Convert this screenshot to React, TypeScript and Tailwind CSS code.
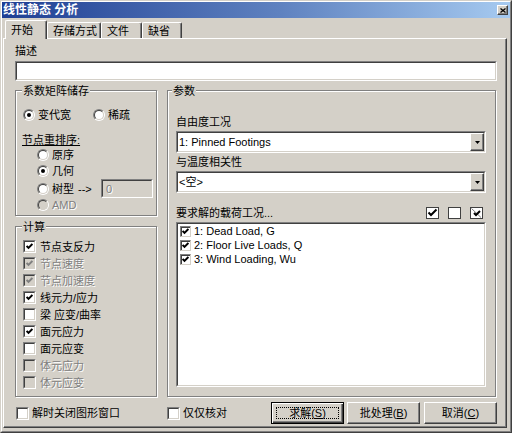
const sunkenOuter = "border border-t-[#808080] border-l-[#808080] border-r-white border-b-white";
const sunkenInner = "border border-t-[#404040] border-l-[#404040] border-r-[#d4d0c8] border-b-[#d4d0c8]";
const raised = "border border-t-white border-l-white border-r-[#404040] border-b-[#404040] shadow-[inset_-1px_-1px_0_#808080]";
const disabledText = "text-[#808080] [text-shadow:1px_1px_0_#fff]";

const CALC = [
  { label: "节点支反力", checked: true },
  { label: "节点速度", checked: true, disabled: true },
  { label: "节点加速度", checked: true, disabled: true },
  { label: "线元力/应力", checked: true },
  { label: "梁 应变/曲率" },
  { label: "面元应力", checked: true },
  { label: "面元应变" },
  { label: "体元应力", disabled: true },
  { label: "体元应变", disabled: true },
];

const LOADS = ["1: Dead Load, G", "2: Floor Live Loads, Q", "3: Wind Loading, Wu"];

function Radio({ checked, disabled }: { checked?: boolean; disabled?: boolean }) {
  return (
    <span className="w-[12px] h-[12px] shrink-0 flex rounded-full border border-t-[#808080] border-l-[#808080] border-r-white border-b-white">
      <span className={`flex-1 flex items-center justify-center rounded-full border border-t-[#404040] border-l-[#404040] border-r-[#d4d0c8] border-b-[#d4d0c8] ${disabled ? "bg-[#d4d0c8]" : "bg-white"}`}>
        {checked && <span className="w-[4px] h-[4px] rounded-full bg-black" />}
      </span>
    </span>
  );
}

function Tick({ color = "#000" }: { color?: string }) {
  return (
    <svg width="7" height="7" viewBox="0 0 7 7">
      <polyline points="0.6,3 2.5,4.9 6.4,1" fill="none" stroke={color} strokeWidth="2" />
    </svg>
  );
}

function Check({ checked, disabled }: { checked?: boolean; disabled?: boolean }) {
  return (
    <span className={`w-[13px] h-[13px] shrink-0 flex ${sunkenOuter}`}>
      <span className={`flex-1 flex items-center justify-center ${sunkenInner} ${disabled ? "bg-[#d4d0c8]" : "bg-white"}`}>
        {checked && <Tick color={disabled ? "#808080" : "#000"} />}
      </span>
    </span>
  );
}

function Group({ title, className, children }: { title: string; className: string; children: React.ReactNode }) {
  return (
    <div className={`relative border border-[#808080] shadow-[1px_1px_0_#fff,inset_1px_1px_0_#fff] ${className}`}>
      <span className="absolute -top-[7px] px-px bg-[#d4d0c8] leading-[14px] [left:var(--lg)]">{title}</span>
      {children}
    </div>
  );
}

function Select({ value }: { value: string }) {
  return (
    <div className={`w-[310px] h-[22px] flex ${sunkenOuter}`}>
      <div className={`flex-1 flex items-center bg-white ${sunkenInner}`}>
        <span className="flex-1 pl-px">{value}</span>
        <span className={`w-[14px] h-[18px] flex items-center justify-center bg-[#d4d0c8] ${raised}`}>
          <svg width="5" height="3" viewBox="0 0 5 3">
            <polygon points="0,0 5,0 2.5,3" fill="#000" />
          </svg>
        </span>
      </div>
    </div>
  );
}

function Button({ label, hot, isDefault }: { label: string; hot: string; isDefault?: boolean }) {
  return (
    <button
      className={`relative w-[73px] h-[22px] flex items-center justify-center bg-[#d4d0c8] ${
        isDefault ? "border border-black shadow-[inset_1px_1px_0_#fff,inset_-1px_-1px_0_#404040,inset_-2px_-2px_0_#808080]" : raised
      }`}
    >
      {isDefault && <span className="absolute inset-[4px] border border-dotted border-black" />}
      <span>
        {label}(<u>{hot}</u>)
      </span>
    </button>
  );
}

export default function App() {
  return (
    <div className="w-[512px] h-[433px] bg-[#d4d0c8] border border-t-[#d4d0c8] border-l-[#d4d0c8] border-r-[#404040] border-b-[#404040] font-['Liberation_Sans','Noto_Sans_CJK_SC',sans-serif] text-[11px] leading-[14px] text-black overflow-hidden">
      <div className="h-full flex flex-col border border-t-white border-l-white border-r-[#808080] border-b-[#808080]">
        {/* Title bar */}
        <div className="h-[16px] flex items-center justify-between pl-[1px] pr-[2px] bg-[linear-gradient(to_right,#1f3f94,#5f82c0_55%,#a6caf0)]">
          <span className="text-white font-bold text-[12px]">线性静态 分析</span>
          <span className={`w-[11px] h-[10px] flex items-center justify-center bg-[#d4d0c8] ${raised}`}>
            <svg width="6" height="5" viewBox="0 0 6 5">
              <path d="M0.5 0.5L5.5 4.5M5.5 0.5L0.5 4.5" stroke="#000" strokeWidth="1.3" />
            </svg>
          </span>
        </div>

        {/* Tabs */}
        <div className="h-[20px] flex items-end ml-[3px] relative z-10">
          <div className="w-[42px] h-[19px] -mb-px pl-[5px] pt-[2px] bg-[#d4d0c8] rounded-t-[2px] border-t border-l border-t-white border-l-white border-r border-r-[#404040] shadow-[inset_-1px_0_0_#808080]">
            开始
          </div>
          {[
            ["存储方式", "w-[54px]"],
            ["文件", "w-[41px]"],
            ["缺省", "w-[40px]"],
          ].map(([t, w]) => (
            <div
              key={t}
              className={`${w} h-[16px] pl-[5px] pt-px rounded-t-[2px] border-t border-l border-t-white border-l-white border-r border-r-[#404040] shadow-[inset_-1px_0_0_#808080]`}
            >
              {t}
            </div>
          ))}
        </div>

        {/* Tab panel */}
        <div className={`ml-[1px] w-[504px] h-[390px] pl-[11px] pt-[5px] ${raised}`}>
          <div>描述</div>
          <div className={`mt-[3px] w-[482px] h-[20px] flex ${sunkenOuter}`}>
            <div className={`flex-1 bg-white ${sunkenInner}`} />
          </div>

          <div className="mt-[9px] flex gap-[10px]">
            {/* Left column */}
            <div className="w-[142px] flex flex-col gap-[10px]">
              <Group title="系数矩阵储存" className="h-[126px] pt-[17px] [--lg:6px]">
                <div className="flex items-center h-[14px] pl-[7px]">
                  <span className="w-[70px] flex items-center gap-[3px]">
                    <Radio checked />
                    变代宽
                  </span>
                  <span className="flex items-center gap-[3px]">
                    <Radio />
                    稀疏
                  </span>
                </div>
                <div className="mt-[11px] pl-[6px] underline">节点重排序:</div>
                <div className="pl-[21px]">
                  <div className="h-[16px] flex items-center gap-[3px]">
                    <Radio />
                    原序
                  </div>
                  <div className="h-[16px] flex items-center gap-[3px]">
                    <Radio checked />
                    几何
                  </div>
                  <div className="h-[19px] flex items-center gap-[3px]">
                    <Radio />
                    <span className="w-[23px]">树型</span>
                    <span className="w-[20px]">--&gt;</span>
                    <div className={`w-[52px] h-[19px] flex ${sunkenOuter}`}>
                      <div className={`flex-1 flex items-center pl-[3px] bg-[#d4d0c8] ${sunkenInner} ${disabledText}`}>0</div>
                    </div>
                  </div>
                  <div className={`h-[14px] flex items-center gap-[3px] ${disabledText}`}>
                    <Radio disabled />
                    AMD
                  </div>
                </div>
              </Group>

              <Group title="计算" className="h-[171px] pt-[11px] pl-[7px] [--lg:6px]">
                {CALC.map((c) => (
                  <div key={c.label} className={`h-[17px] flex items-center gap-[4px] ${c.disabled ? disabledText : ""}`}>
                    <Check checked={c.checked} disabled={c.disabled} />
                    {c.label}
                  </div>
                ))}
              </Group>
            </div>

            {/* Right column */}
            <Group title="参数" className="w-[329px] h-[307px] pt-[24px] pl-[8px] [--lg:4px]">
              <div>自由度工况</div>
              <div className="mt-[2px]">
                <Select value="1: Pinned Footings" />
              </div>
              <div className="mt-[2px]">与温度相关性</div>
              <div className="mt-[2px]">
                <Select value="<空>" />
              </div>
              <div className="mt-[13px] w-[310px] h-[14px] flex items-center justify-between pr-[3px]">
                <span>要求解的载荷工况...</span>
                <span className="flex gap-[9px]">
                  <svg width="13" height="12" viewBox="0 0 13 12">
                    <rect x="0.5" y="0.5" width="12" height="11" fill="#fff" stroke="#404040" />
                    <polyline points="2.5,5.5 5,8 10.5,2.5" fill="none" stroke="#000" strokeWidth="2" />
                  </svg>
                  <svg width="13" height="12" viewBox="0 0 13 12">
                    <rect x="0.5" y="0.5" width="12" height="11" fill="#fff" stroke="#404040" />
                  </svg>
                  <svg width="13" height="12" viewBox="0 0 13 12">
                    <rect x="0.5" y="0.5" width="12" height="11" fill="#fff" stroke="#404040" />
                    <line x1="1.5" y1="1.5" x2="11" y2="10.5" stroke="#808080" />
                    <polyline points="4,6 6,8 10,4" fill="none" stroke="#000" strokeWidth="2" />
                  </svg>
                </span>
              </div>
              <div className={`mt-[2px] w-[310px] h-[165px] flex ${sunkenOuter}`}>
                <div className={`flex-1 bg-white pl-[2px] ${sunkenInner}`}>
                  {LOADS.map((l) => (
                    <div key={l} className="h-[14px] flex items-center gap-[3px]">
                      <span className="w-[11px] h-[11px] flex items-center justify-center border border-t-[#808080] border-l-[#808080] border-r-[#d4d0c8] border-b-[#d4d0c8] bg-white shadow-[inset_1px_1px_0_#404040]">
                        <Tick />
                      </span>
                      {l}
                    </div>
                  ))}
                </div>
              </div>
            </Group>
          </div>

          {/* Bottom row */}
          <div className="mt-[5px] h-[22px] flex items-center">
            <div className="w-[152px] pl-px flex items-center gap-[3px]">
              <Check />
              解时关闭图形窗口
            </div>
            <div className="w-[104px] flex items-center gap-[3px]">
              <Check />
              仅仅核对
            </div>
            <Button label="求解" hot="S" isDefault />
            <div className="ml-[3px]">
              <Button label="批处理" hot="B" />
            </div>
            <div className="ml-[4px]">
              <Button label="取消" hot="C" />
            </div>
          </div>
        </div>
      </div>
    </div>
  );
}
